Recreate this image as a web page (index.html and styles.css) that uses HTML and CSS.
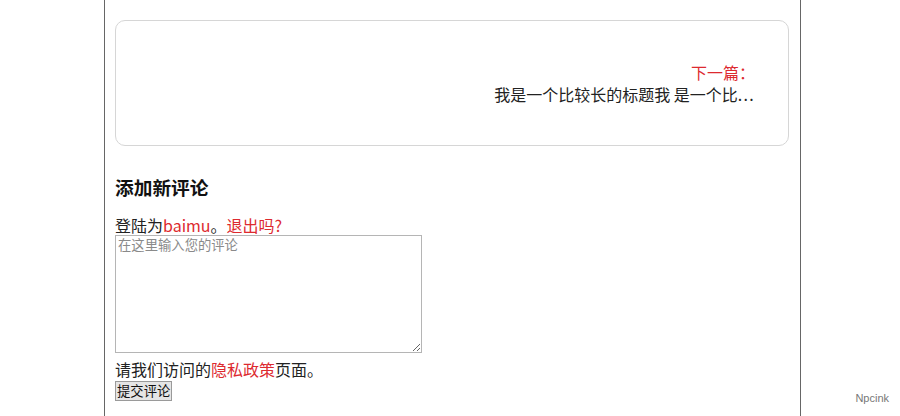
FILE: index.html
```html
<!DOCTYPE html>
<html lang="zh-CN">
<head>
<meta charset="utf-8">
<title>评论</title>
<link rel="stylesheet" href="styles.css">
</head>
<body>
<div class="page">
  <div class="nav-box">
    <div class="next">
      <a class="next-label" href="#">下一篇：</a>
      <a class="next-title" href="#">我是一个比较长的标题我 是一个比<span class="dots">...</span></a>
    </div>
  </div>
  <h3 class="reply-title">添加新评论</h3>
  <p class="logged">登陆为<a class="red" href="#">baimu</a>。<a class="red" href="#">退出吗?</a></p>
  <textarea class="comment" placeholder="在这里输入您的评论"></textarea>
  <p class="policy">请我们访问的<a class="red" href="#">隐私政策</a>页面。</p>
  <button class="submit" type="button">提交评论</button>
</div>
<div class="watermark">Npcink</div>
</body>
</html>
```

FILE: styles.css
```css
html, body {
  margin: 0;
  padding: 0;
  height: 100%;
  overflow: hidden;
  background: #fff;
}
body {
  font-family: "Noto Sans CJK SC", "Noto Sans", sans-serif;
  font-size: 16px;
  color: #222;
}
a { text-decoration: none; }
.red { color: #dd2a2f; }
.page {
  margin-left: 104px;
  width: 674px;
  min-height: 100%;
  padding: 20px 11px 0 10px;
  border-left: 1px solid #666;
  border-right: 1px solid #666;
  box-sizing: content-box;
}
.nav-box {
  height: 124px;
  border: 1px solid #d6d6d6;
  border-radius: 10px;
  display: flex;
  align-items: center;
  justify-content: flex-end;
  padding-right: 33px;
}
.next {
  display: flex;
  flex-direction: column;
  align-items: flex-end;
  line-height: 22px;
}
.next-label { color: #dd2a2f; }
.next-title { color: #222; white-space: nowrap; }
.dots { letter-spacing: 1.3px; }
.reply-title {
  font-size: 18.72px;
  font-weight: bold;
  line-height: 26px;
  margin: 28px 0 16px;
  color: #111;
}
.logged {
  margin: 0;
  line-height: 19px;
}
.comment {
  display: block;
  width: 307px;
  height: 118px;
  box-sizing: border-box;
  border: 1px solid #b5b5b5;
  padding: 1px 2px;
  margin: 0;
  font-family: "Noto Sans CJK SC", sans-serif;
  font-size: 13.33px;
  line-height: 15px;
  resize: vertical;
}
.comment::placeholder { color: #8a8a8a; }
.policy {
  margin: 6px 0 0;
  line-height: 20px;
}
.submit {
  display: block;
  margin-top: 2px;
  height: 20px;
  padding: 0 1px;
  font-family: "Noto Sans CJK SC", sans-serif;
  font-size: 13.33px;
  line-height: 18px;
  color: #111;
  background: #e5e5e5;
  border: 1px solid #9a9a9a;
  border-radius: 0;
}
.watermark {
  position: absolute;
  right: 11px;
  bottom: 12px;
  font-family: "Liberation Sans", Arial, sans-serif;
  font-size: 11px;
  color: #777;
}
```
